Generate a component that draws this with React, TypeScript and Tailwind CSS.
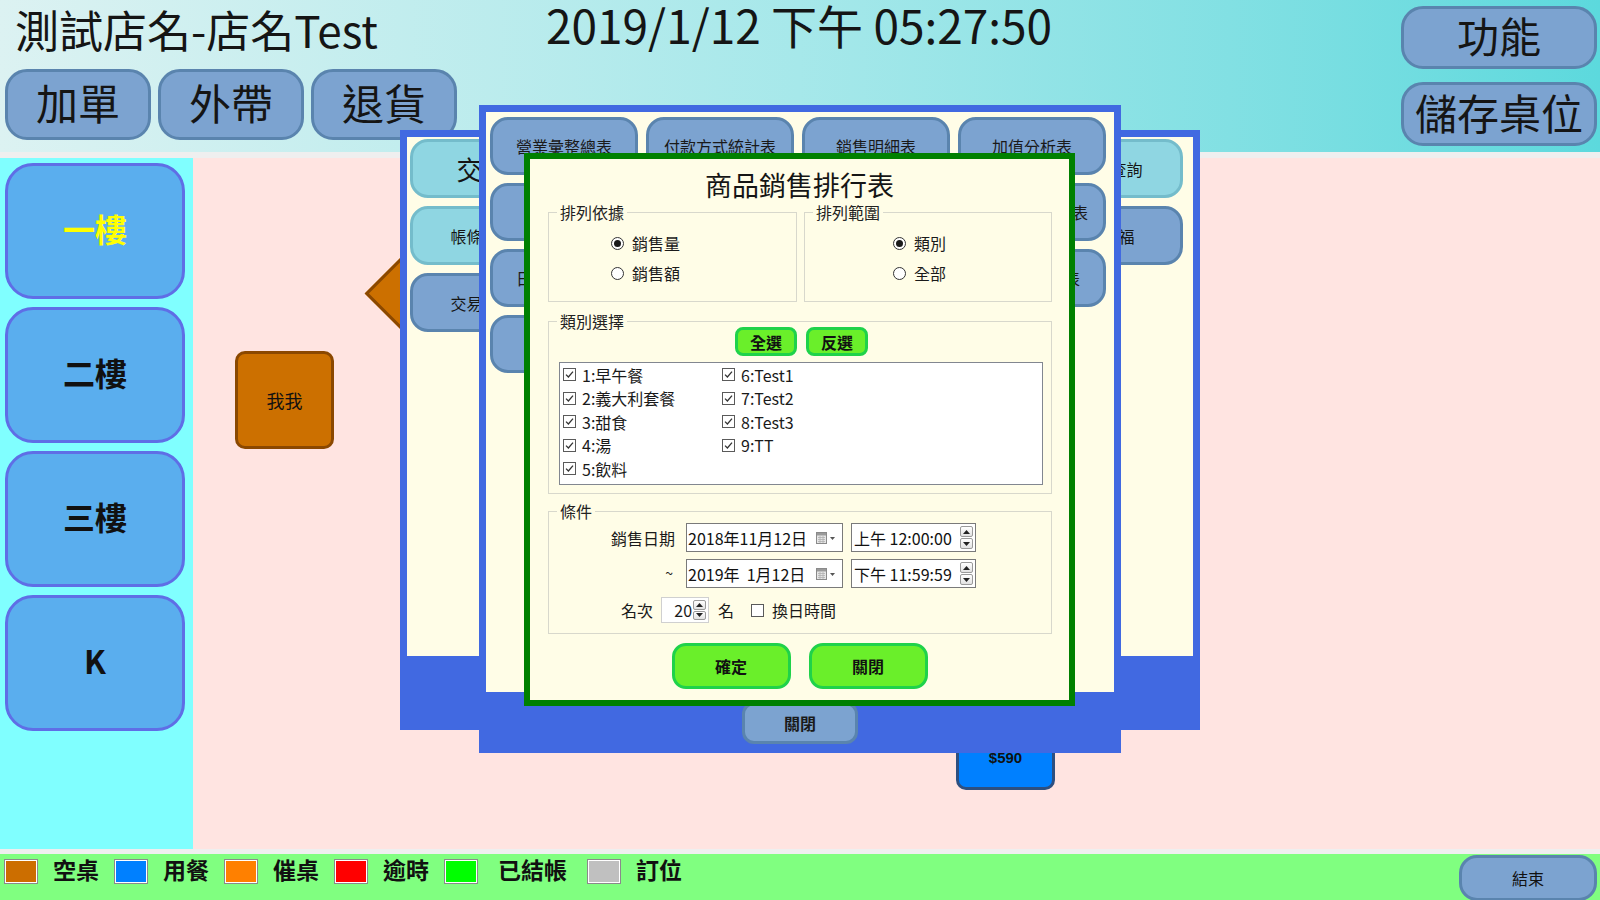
import React from "react";

const CREAM = "bg-[#fffde7]";

function CheckBox({ checked = true }: { checked?: boolean }) {
  return (
    <span className="inline-flex h-[13px] w-[13px] shrink-0 items-center justify-center border border-[#5a5a5a] bg-white">
      {checked && (
        <svg viewBox="0 0 11 11" className="h-[11px] w-[11px]">
          <path d="M2 5.6 L4.4 8 L9 2.6" fill="none" stroke="#333" strokeWidth="1.3" />
        </svg>
      )}
    </span>
  );
}

function Radio({ checked = false }: { checked?: boolean }) {
  return (
    <span className="inline-flex h-[13px] w-[13px] shrink-0 items-center justify-center rounded-full border border-[#333] bg-white">
      {checked && <span className="h-[7px] w-[7px] rounded-full bg-[#1a1a1a]" />}
    </span>
  );
}

function Spinner() {
  return (
    <span className="flex w-[15px] flex-col gap-px self-stretch py-[2px] pr-[2px]">
      <span className="flex flex-1 items-center justify-center rounded-[2px] border border-[#9a9a9a] bg-linear-to-b from-white to-[#e2e2e2]">
        <svg viewBox="0 0 7 4" className="h-[4px] w-[7px]">
          <path d="M0 4 L3.5 0 L7 4Z" fill="#222" />
        </svg>
      </span>
      <span className="flex flex-1 items-center justify-center rounded-[2px] border border-[#9a9a9a] bg-linear-to-b from-white to-[#e2e2e2]">
        <svg viewBox="0 0 7 4" className="h-[4px] w-[7px]">
          <path d="M0 0 L3.5 4 L7 0Z" fill="#222" />
        </svg>
      </span>
    </span>
  );
}

function CalendarIcon() {
  return (
    <svg width="22" height="12" viewBox="0 0 22 12" className="shrink-0">
      <rect x="0.5" y="0.5" width="10" height="11" fill="#e6e6e6" stroke="#8a8a8a" />
      <rect x="1" y="1" width="9" height="2.5" fill="#9a9a9a" />
      <path d="M2 5.5 H9 M2 7.5 H9 M2 9.5 H9 M4 4 V11 M7 4 V11" stroke="#b0b0b0" strokeWidth="0.8" />
      <path d="M14 5 L19 5 L16.5 8Z" fill="#555" />
    </svg>
  );
}

function DateBox({ text }: { text: string }) {
  return (
    <div className="flex h-[29px] w-[157px] items-center border border-[#7a7a7a] bg-white pr-[4px] pl-[1px] text-[16px] whitespace-pre text-[#111]">
      <span>{text}</span>
      <span className="ml-auto">
        <CalendarIcon />
      </span>
    </div>
  );
}

function TimeBox({ text }: { text: string }) {
  return (
    <div className="flex h-[29px] w-[125px] items-center border border-[#7a7a7a] bg-white pl-[2px] text-[16px] text-[#111]">
      <span>{text}</span>
      <span className="ml-auto flex self-stretch">
        <Spinner />
      </span>
    </div>
  );
}

function Group({
  label,
  className,
  children,
}: {
  label: string;
  className: string;
  children?: React.ReactNode;
}) {
  return (
    <div className={"relative border border-[#d8d8cc] " + className}>
      <span className={"absolute top-[-11px] left-[8px] px-[3px] text-[16px] leading-[20px] text-[#222] " + CREAM}>
        {label}
      </span>
      {children}
    </div>
  );
}

function GreenButton({ children, small }: { children: React.ReactNode; small?: boolean }) {
  return small ? (
    <button className="flex h-[29px] w-[62px] items-center justify-center rounded-[8px] border-[3px] border-[#1fd24a] bg-[#6aef2a] text-[16px] font-bold text-[#111]">
      {children}
    </button>
  ) : (
    <button className="flex h-[46px] w-[119px] items-center justify-center rounded-[14px] border-[3px] border-[#1fd24a] bg-[#6aef2a] text-[16px] font-bold text-[#111]">
      {children}
    </button>
  );
}

const reportButtons = [
  "營業彙整總表",
  "付款方式統計表",
  "銷售明細表",
  "加值分析表",
  "月報表",
  "類別銷售統計",
  "時段銷售分析",
  "商品銷售排行表",
  "日營業統計表",
  "會員消費明細",
  "折扣統計表",
  "退貨明細報表",
  "作廢單",
];

const categories = [
  "1:早午餐",
  "2:義大利套餐",
  "3:甜食",
  "4:湯",
  "5:飲料",
  "6:Test1",
  "7:Test2",
  "8:Test3",
  "9:TT",
];

const legend = [
  { color: "bg-[#cc6e00]", label: "空桌", text: "" },
  { color: "bg-[#0080ff]", label: "用餐", text: "" },
  { color: "bg-[#ff8000]", label: "催桌", text: "" },
  { color: "bg-[#ff0000]", label: "逾時", text: "" },
  { color: "bg-[#00ff00]", label: "已結帳", text: "mx-[5px]" },
  { color: "bg-[#c0c0c0]", label: "訂位", text: "" },
];

const floors = ["一樓", "二樓", "三樓", "K"];

export default function App() {
  return (
    <div className="relative flex h-[900px] w-[1600px] flex-col overflow-hidden bg-[#efefef] font-['Noto_Sans_CJK_TC','Noto_Sans',sans-serif] text-[#151515]">
      {/* header */}
      <header className="flex h-[152px] shrink-0 items-start bg-linear-to-r from-[#dcf2f2] via-[#a6e8ea] to-[#5cd9dd]">
        <div className="flex w-[530px] flex-col pt-[3px] pl-[5px]">
          <div className="pl-[10px] text-[44px] leading-[52px]">測試店名-店名Test</div>
          <div className="mt-[14px] flex gap-[7px]">
            {["加單", "外帶", "退貨"].map((t) => (
              <button
                key={t}
                className="flex h-[71px] w-[146px] items-center justify-center rounded-[22px] border-[3px] border-[#5a84ae] bg-[#7ca3d0] pb-[5px] text-[42px] leading-none text-[#151515]"
              >
                {t}
              </button>
            ))}
          </div>
        </div>
        <div className="ml-[16px] text-[46px] leading-[48px]">2019/1/12 下午 05:27:50</div>
        <div className="mt-[6px] mr-[3px] ml-auto flex flex-col gap-[13px]">
          <button className="flex h-[63px] w-[196px] items-center justify-center rounded-[22px] border-[3px] border-[#5a84ae] bg-[#7ca3d0] pb-[5px] text-[42px] leading-none">
            功能
          </button>
          <button className="flex h-[64px] w-[196px] items-center justify-center rounded-[22px] border-[3px] border-[#5a84ae] bg-[#7ca3d0] pb-[5px] text-[42px] leading-none">
            儲存桌位
          </button>
        </div>
      </header>

      {/* main */}
      <div className="mt-[6px] flex h-[691px] shrink-0">
        <nav className="flex w-[193px] shrink-0 flex-col gap-[8px] bg-[#80ffff] pt-[5px] pl-[5px]">
          {floors.map((f, i) => (
            <button
              key={f}
              className={
                "flex h-[136px] w-[180px] items-center justify-center rounded-[28px] border-[3px] border-[#5f6ee6] bg-[#5aaeee] pb-[6px] text-[32px] font-bold " +
                (i === 0 ? "text-[#ffff00]" : "text-[#111]")
              }
            >
              {f}
            </button>
          ))}
        </nav>
        <div className="relative flex-1 bg-[#ffe4e1]">
          <div className="absolute top-[193px] left-[42px] flex h-[98px] w-[99px] items-center justify-center rounded-[10px] border-[3px] border-[#8b4800] bg-[#cc7000] text-[18px] text-[#111]">
            我我
          </div>
          <div className="absolute top-[96px] left-[188px] h-[79px] w-[79px] rotate-45 border-[3px] border-[#8b4800] bg-[#cc7000]" />
          <div className="absolute top-[568px] left-[763px] flex h-[64px] w-[99px] items-center justify-center rounded-[10px] border-[3px] border-[#2d4f80] bg-[#0080ff] font-['Liberation_Sans',sans-serif] text-[15px] font-bold text-[#111]">
            $590
          </div>
        </div>
      </div>

      {/* footer */}
      <footer className="mt-[5px] flex flex-1 items-start bg-[#80ff80]">
        <div className="mt-[5px] ml-[4px] flex h-[25px] items-center gap-[15px]">
          {legend.map((l) => (
            <React.Fragment key={l.label}>
              <span className="h-[25px] w-[34px] border border-[#8a8a8a] bg-white p-px">
                <span className={"block h-full w-full " + l.color} />
              </span>
              <span className={"mb-[5px] text-[23px] leading-none font-bold text-[#111] " + l.text}>{l.label}</span>
            </React.Fragment>
          ))}
        </div>
        <button className="mt-px mr-[3px] ml-auto flex h-[46px] w-[138px] items-center justify-center rounded-[18px] border-[3px] border-[#5a84ae] bg-[#7ca3d0] text-[16px] text-[#111]">
          結束
        </button>
      </footer>

      {/* back dialog */}
      <div className="absolute top-[130px] left-[400px] flex h-[600px] w-[800px] flex-col bg-[#4169e1] p-[7px]">
        <div className={"flex h-[519px] justify-between pt-[2px] pr-[10px] pl-[3px] " + CREAM}>
          <div className="flex w-[145px] flex-col gap-[8px]">
            <div className="flex h-[59px] items-center justify-center rounded-[18px] border-[3px] border-[#74bccb] bg-[#8fd6e2] text-[26px]">
              交班
            </div>
            <div className="flex h-[59px] items-center justify-center rounded-[18px] border-[3px] border-[#74bccb] bg-[#8fd6e2] text-[16px]">
              帳條列印
            </div>
            <div className="flex h-[59px] items-center justify-center rounded-[18px] border-[3px] border-[#5a84ae] bg-[#7ca3d0] text-[16px]">
              交易明細
            </div>
          </div>
          <div className="flex w-[145px] flex-col gap-[8px]">
            <div className="flex h-[59px] items-center justify-center rounded-[18px] border-[3px] border-[#74bccb] bg-[#8fd6e2] text-[16px]">
              交易查詢
            </div>
            <div className="flex h-[59px] items-center justify-center rounded-[18px] border-[3px] border-[#5a84ae] bg-[#7ca3d0] text-[16px]">
              員工福
            </div>
          </div>
        </div>
      </div>

      {/* report dialog */}
      <div className="absolute top-[105px] left-[479px] flex h-[648px] w-[642px] flex-col bg-[#4169e1] p-[7px]">
        <div className={"h-[580px] pt-[5px] pl-[4px] " + CREAM}>
          <div className="grid grid-cols-[repeat(4,148px)] gap-x-[8px] gap-y-[8px]">
            {reportButtons.map((t, i) => (
              <div
                key={i}
                className="flex h-[58px] items-center justify-center rounded-[18px] border-[3px] border-[#5a84ae] bg-[#7ca3d0] text-[16px] text-[#1a1a1a]"
              >
                {t}
              </div>
            ))}
          </div>
        </div>
        <div className="flex flex-1 justify-center pt-[10px]">
          <button className="flex h-[42px] w-[116px] items-center justify-center rounded-[12px] border-[3px] border-[#5a84ae] bg-[#7ca3d0] text-[16px] font-bold text-[#1a1a1a]">
            關閉
          </button>
        </div>
      </div>

      {/* ranking dialog */}
      <div className={"absolute top-[153px] left-[524px] flex h-[553px] w-[551px] flex-col border-[6px] border-[#008000] " + CREAM}>
        <div className="mt-[10px] h-[32px] text-center text-[27px] leading-[32px]">商品銷售排行表</div>

        <div className="mt-[11px] ml-[18px] flex w-[504px] gap-[7px] text-[16px] text-[#1a1a1a]">
          <Group label="排列依據" className="h-[90px] w-[249px]">
            <div className="flex flex-col gap-[10px] pt-[20px] pl-[62px]">
              <label className="flex h-[20px] items-center gap-[8px]">
                <Radio checked />
                銷售量
              </label>
              <label className="flex h-[20px] items-center gap-[8px]">
                <Radio />
                銷售額
              </label>
            </div>
          </Group>
          <Group label="排列範圍" className="h-[90px] w-[248px]">
            <div className="flex flex-col gap-[10px] pt-[20px] pl-[88px]">
              <label className="flex h-[20px] items-center gap-[8px]">
                <Radio checked />
                類別
              </label>
              <label className="flex h-[20px] items-center gap-[8px]">
                <Radio />
                全部
              </label>
            </div>
          </Group>
        </div>

        <Group label="類別選擇" className="mt-[19px] ml-[18px] h-[173px] w-[504px] text-[16px] text-[#1a1a1a]">
          <div className="flex gap-[9px] pt-[5px] pl-[186px]">
            <GreenButton small>全選</GreenButton>
            <GreenButton small>反選</GreenButton>
          </div>
          <div className="mt-[6px] ml-[10px] grid h-[123px] w-[484px] grid-flow-col grid-cols-[159px_159px] grid-rows-[repeat(5,23.5px)] content-start border border-[#828790] bg-white pl-[3px]">
            {categories.map((c) => (
              <div key={c} className="flex items-center gap-[6px] leading-none">
                <CheckBox />
                {c}
              </div>
            ))}
          </div>
        </Group>

        <Group label="條件" className="mt-[17px] ml-[18px] h-[123px] w-[504px] text-[16px] text-[#1a1a1a]">
          <div className="flex flex-col pt-[11px]">
            <div className="flex h-[29px] items-center">
              <span className="w-[126px] text-right">銷售日期</span>
              <span className="ml-[11px]">
                <DateBox text="2018年11月12日" />
              </span>
              <span className="ml-[8px]">
                <TimeBox text="上午 12:00:00" />
              </span>
            </div>
            <div className="mt-[7px] flex h-[29px] items-center">
              <span className="w-[124px] text-right text-[14px]">~</span>
              <span className="ml-[13px]">
                <DateBox text="2019年  1月12日" />
              </span>
              <span className="ml-[8px]">
                <TimeBox text="下午 11:59:59" />
              </span>
            </div>
            <div className="mt-[9px] flex h-[26px] items-center pl-[72px]">
              <span>名次</span>
              <div className="ml-[8px] flex h-[26px] w-[48px] items-center border border-[#d0d0d0] bg-white">
                <span className="ml-auto pr-[1px]">20</span>
                <span className="flex self-stretch">
                  <Spinner />
                </span>
              </div>
              <span className="ml-[9px]">名</span>
              <span className="ml-[17px] flex items-center gap-[8px]">
                <CheckBox checked={false} />
                換日時間
              </span>
            </div>
          </div>
        </Group>

        <div className="mt-[9px] flex justify-center gap-[18px]">
          <GreenButton>確定</GreenButton>
          <GreenButton>關閉</GreenButton>
        </div>
      </div>
    </div>
  );
}
